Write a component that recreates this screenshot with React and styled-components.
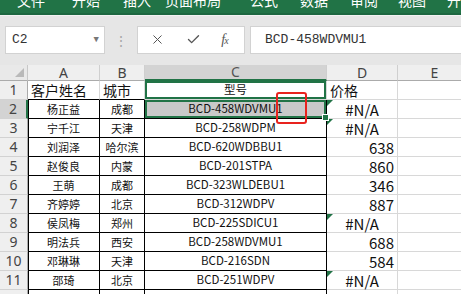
import React from "react";
import styled, { createGlobalStyle } from "styled-components";
import { X, Check } from "lucide-react";

const GlobalStyle = createGlobalStyle`
  html, body {
    margin: 0;
    padding: 0;
    background: #ffffff;
    overflow: hidden;
  }
  body {
    font-family: "Noto Sans CJK SC", "Noto Sans", sans-serif;
  }
`;

const Window = styled.div`
  width: 461px;
  height: 294px;
  overflow: hidden;
  background: #e6e6e6;
  display: flex;
  flex-direction: column;
`;

const Ribbon = styled.div`
  height: 13px;
  flex: none;
  background: #217346;
  border-bottom: 2px solid #1d6740;
  display: flex;
  padding-left: 17px;
  overflow: hidden;
`;

const Tab = styled.span`
  flex: none;
  width: ${(p) => p.$w}px;
  color: #ffffff;
  font-size: 14px;
  line-height: 14px;
  margin-top: -7px;
  white-space: nowrap;
`;

const FormulaArea = styled.div`
  height: 50px;
  flex: none;
  display: flex;
  align-items: center;
  padding: 0 0 2px 5px;
  box-sizing: border-box;
  border-top: 1px solid #f2f2f2;
`;

const NameBox = styled.div`
  width: 100px;
  height: 28px;
  box-sizing: border-box;
  background: #ffffff;
  border: 1px solid #d2d2d2;
  display: flex;
  align-items: center;
  justify-content: space-between;
  padding: 0 5px 0 6px;
  font-family: "Liberation Mono", monospace;
  font-size: 13px;
  color: #333;
`;

const Caret = styled.span`
  font-size: 9px;
  color: #777;
`;

const Grip = styled.div`
  width: 32px;
  text-align: center;
  color: #a8a8a8;
  font-size: 14px;
  line-height: 1;
`;

const FxBox = styled.div`
  width: 108px;
  height: 28px;
  box-sizing: border-box;
  background: #ffffff;
  border: 1px solid #d2d2d2;
  display: flex;
  align-items: center;
  justify-content: space-around;
  padding: 0 6px 0 2px;
  color: #555;
`;

const FxLabel = styled.span`
  font-family: "Liberation Serif", serif;
  font-style: italic;
  font-size: 14px;
  color: #555;
  letter-spacing: -1px;
  & small {
    font-size: 10px;
  }
`;

const FormulaInput = styled.div`
  flex: 1;
  height: 28px;
  margin-left: 5px;
  margin-right: -4px;
  box-sizing: border-box;
  background: #ffffff;
  border: 1px solid #d2d2d2;
  display: flex;
  align-items: center;
  padding-left: 14px;
  font-family: "Liberation Mono", monospace;
  font-size: 13px;
  color: #333;
`;

const SheetWrap = styled.div`
  position: relative;
  flex: 1;
  background: #ffffff;
`;

const Sheet = styled.div`
  display: grid;
  grid-template-columns: 28px 72px 45px 182px 71px 74px;
  grid-template-rows: 16px repeat(12, 19px);
`;

const Corner = styled.div`
  position: relative;
  background: #e9e9e9;
  border-right: 1px solid #c8c8c8;
  border-bottom: 1px solid #ababab;
  &::after {
    content: "";
    position: absolute;
    right: 3px;
    bottom: 3px;
    border-bottom: 9px solid #b9b9b9;
    border-left: 9px solid transparent;
  }
`;

const ColHead = styled.div`
  background: ${(p) => (p.$active ? "#d3d3d3" : "#efefef")};
  border-right: 1px solid #cfcfcf;
  border-bottom: ${(p) => (p.$active ? "2px solid #217346" : "1px solid #ababab")};
  display: flex;
  align-items: center;
  justify-content: center;
  font-family: "Noto Sans", sans-serif;
  font-size: 14px;
  line-height: 1;
  color: ${(p) => (p.$active ? "#555" : "#444")};
  box-sizing: border-box;
`;

const RowHead = styled.div`
  background: ${(p) => (p.$active ? "#d3d3d3" : "#efefef")};
  border-right: ${(p) => (p.$active ? "2px solid #217346" : "1px solid #ababab")};
  border-bottom: 1px solid #d2d2d2;
  display: flex;
  align-items: center;
  justify-content: center;
  font-family: "Noto Sans", sans-serif;
  font-size: 14px;
  line-height: 1;
  color: #444;
  box-sizing: border-box;
  overflow: hidden;
`;

const Cell = styled.div`
  position: relative;
  box-sizing: border-box;
  display: flex;
  align-items: center;
  justify-content: ${(p) =>
    p.$align === "left" ? "flex-start" : p.$align === "right" ? "flex-end" : "center"};
  padding: 0 3px;
  font-size: ${(p) => p.$size || 11}px;
  line-height: 1;
  color: #111;
  white-space: nowrap;
  background: ${(p) => (p.$fill ? "#c9c9c9" : "#ffffff")};
  border-right: 1px solid ${(p) => (p.$black ? "#000" : "#d8d8d8")};
  border-bottom: 1px solid ${(p) => (p.$black || p.$under ? "#000" : "#d8d8d8")};
  box-shadow: ${(p) =>
    p.$sel
      ? "inset 0 0 0 2px #217346"
      : p.$leftLine
      ? "inset 1px 0 0 #000"
      : "none"};
  &::before {
    content: "";
    display: ${(p) => (p.$err ? "block" : "none")};
    position: absolute;
    top: 0;
    left: 0;
    border-top: 6px solid #217346;
    border-right: 6px solid transparent;
  }
  &::after {
    content: "";
    display: ${(p) => (p.$handle ? "block" : "none")};
    position: absolute;
    right: -3px;
    bottom: -3px;
    width: 5px;
    height: 5px;
    background: #217346;
    border: 1px solid #fff;
    z-index: 2;
  }
`;

const Marker = styled.div`
  position: absolute;
  left: 276px;
  top: 27px;
  width: 31px;
  height: 32px;
  box-sizing: border-box;
  border: 2px solid #e8231e;
  border-radius: 3px;
  pointer-events: none;
`;

const tabs = [
  ["文件", 55],
  ["开始", 51],
  ["插入", 42],
  ["页面布局", 85],
  ["公式", 50],
  ["数据", 50],
  ["审阅", 48],
  ["视图", 49],
  ["开发工具", 60],
];

const data = [
  ["杨正益", "成都", "BCD-458WDVMU1", "#N/A"],
  ["宁千江", "天津", "BCD-258WDPM", "#N/A"],
  ["刘润泽", "哈尔滨", "BCD-620WDBBU1", "638"],
  ["赵俊良", "内蒙", "BCD-201STPA", "860"],
  ["王萌", "成都", "BCD-323WLDEBU1", "346"],
  ["齐婷婷", "北京", "BCD-312WDPV", "887"],
  ["侯凤梅", "郑州", "BCD-225SDICU1", "#N/A"],
  ["明法兵", "西安", "BCD-258WDVMU1", "688"],
  ["邓琳琳", "天津", "BCD-216SDN", "584"],
  ["邵琦", "北京", "BCD-251WDPV", "#N/A"],
];

const columns = ["A", "B", "C", "D", "E"];

const App = () => {
  return (
    <>
      <GlobalStyle />
      <Window>
        <Ribbon>
          {tabs.map(([t, w]) => (
            <Tab key={t} $w={w}>
              {t}
            </Tab>
          ))}
        </Ribbon>

        <FormulaArea>
          <NameBox>
            C2
            <Caret>▼</Caret>
          </NameBox>
          <Grip>⋮</Grip>
          <FxBox>
            <X size={15} strokeWidth={1.6} />
            <Check size={15} strokeWidth={2.2} />
            <FxLabel>
              f<small>x</small>
            </FxLabel>
          </FxBox>
          <FormulaInput>BCD-458WDVMU1</FormulaInput>
        </FormulaArea>

        <SheetWrap>
          <Sheet>
            <Corner />
            {columns.map((c) => (
              <ColHead key={c} $active={c === "C"}>
                {c}
              </ColHead>
            ))}

            <RowHead>1</RowHead>
            <Cell $align="left" $size={14} $under>
              客户姓名
            </Cell>
            <Cell $align="left" $size={14} $under>
              城市
            </Cell>
            <Cell $size={11.5} $sel>
              型号
            </Cell>
            <Cell $align="left" $size={14}>
              价格
            </Cell>
            <Cell />

            {data.map((row, i) => {
              const n = i + 2;
              const na = row[3] === "#N/A";
              return (
                <React.Fragment key={n}>
                  <RowHead $active={n === 2}>{n}</RowHead>
                  <Cell $black $leftLine>
                    {row[0]}
                  </Cell>
                  <Cell $black>{row[1]}</Cell>
                  <Cell
                    $black
                    $size={11.5}
                    $sel={n === 2}
                    $fill={n === 2}
                    $handle={n === 2}
                  >
                    {row[2]}
                  </Cell>
                  <Cell
                    $size={15}
                    $align={na ? "center" : "right"}
                    $err={na}
                  >
                    {row[3]}
                  </Cell>
                  <Cell />
                </React.Fragment>
              );
            })}

            <RowHead>12</RowHead>
            <Cell $black $leftLine />
            <Cell $black />
            <Cell $black />
            <Cell />
            <Cell />
          </Sheet>
          <Marker />
        </SheetWrap>
      </Window>
    </>
  );
};

export default App;
